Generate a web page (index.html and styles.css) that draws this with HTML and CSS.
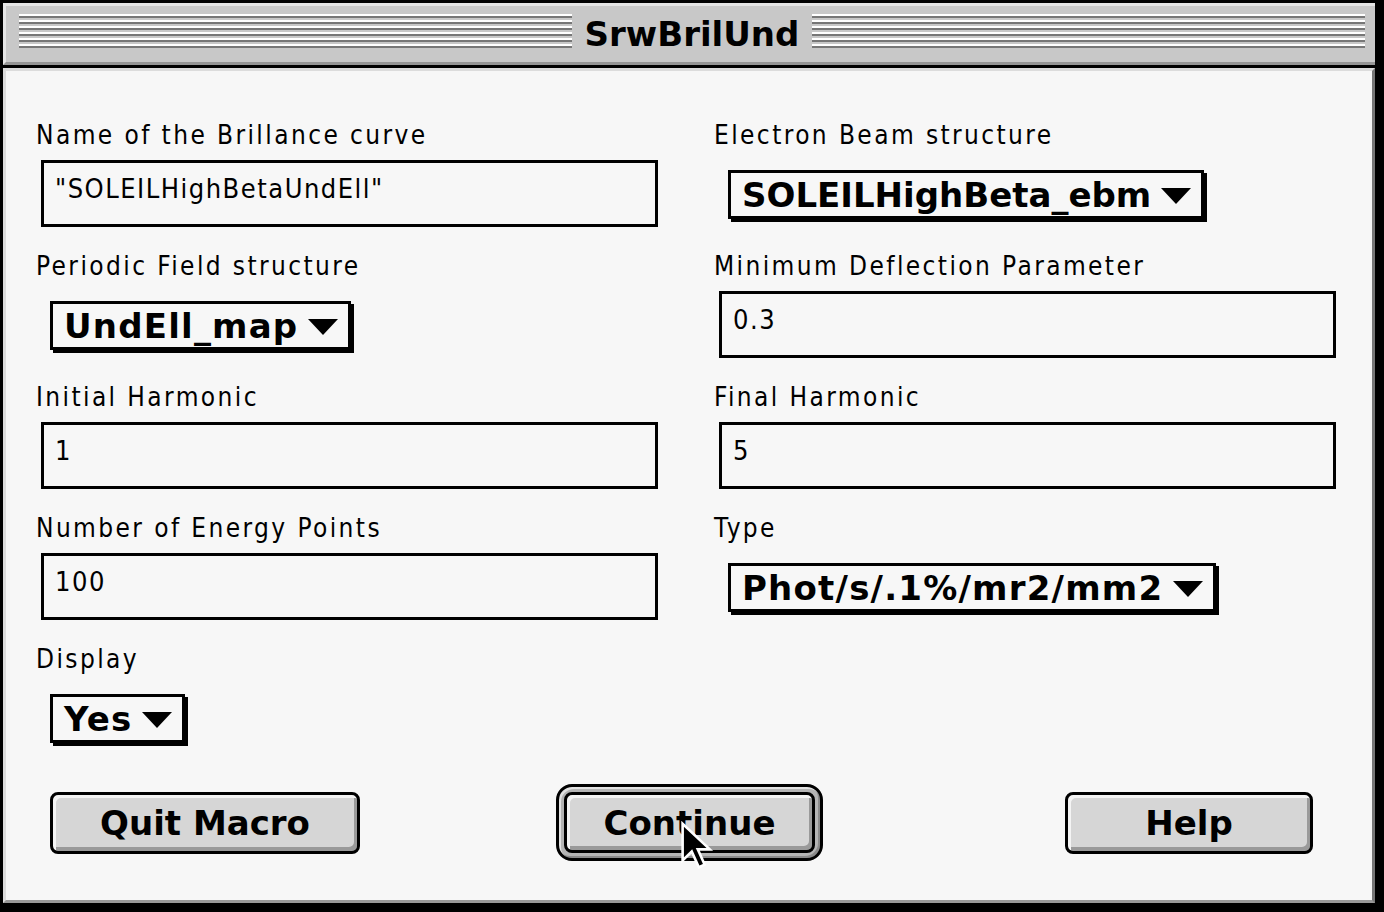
FILE: index.html
```html
<!DOCTYPE html>
<html>
<head>
<meta charset="utf-8">
<title>SrwBrilUnd</title>
<link rel="stylesheet" href="styles.css">
</head>
<body>
<div class="window">
  <div class="titlebar">
    <div class="stripes"></div>
    <div class="title">SrwBrilUnd</div>
    <div class="stripes"></div>
  </div>
  <div class="sep"></div>
  <div class="content">
    <div class="grid">
      <div class="cell">
        <div class="label">Name of the Brillance curve</div>
        <div class="field">"SOLEILHighBetaUndEll"</div>
      </div>
      <div class="cell">
        <div class="label">Electron Beam structure</div>
        <div class="popup">SOLEILHighBeta_ebm<span class="tri"></span></div>
      </div>
      <div class="cell">
        <div class="label">Periodic Field structure</div>
        <div class="popup popup-wide">UndEll_map<span class="tri"></span></div>
      </div>
      <div class="cell">
        <div class="label">Minimum Deflection Parameter</div>
        <div class="field">0.3</div>
      </div>
      <div class="cell">
        <div class="label">Initial Harmonic</div>
        <div class="field">1</div>
      </div>
      <div class="cell">
        <div class="label">Final Harmonic</div>
        <div class="field">5</div>
      </div>
      <div class="cell">
        <div class="label">Number of Energy Points</div>
        <div class="field">100</div>
      </div>
      <div class="cell">
        <div class="label">Type</div>
        <div class="popup popup-wide">Phot/s/.1%/mr2/mm2<span class="tri"></span></div>
      </div>
      <div class="cell">
        <div class="label">Display</div>
        <div class="popup popup-wide">Yes<span class="tri"></span></div>
      </div>
    </div>
    <div class="buttons">
      <div class="btn btn-quit">Quit Macro</div>
      <div class="ring"><div class="btn btn-continue">Continue</div></div>
      <div class="btn btn-help">Help</div>
    </div>
  </div>
  <svg class="cursor" width="34" height="50" viewBox="0 0 13 19">
    <path d="M1 1 L1 15 L4.5 11.6 L7.2 17.6 L9.4 16.6 L6.8 10.8 L11.4 10.8 Z" fill="#000" stroke="#fff" stroke-width="1" stroke-linejoin="miter"/>
  </svg>
</div>
</body>
</html>
```

FILE: styles.css
```css
html, body {
  margin: 0;
  padding: 0;
  background: #000;
}

.window {
  position: relative;
  box-sizing: border-box;
  width: 1384px;
  height: 912px;
  border-left: 3px solid #000;
  border-top: 3px solid #000;
  border-right: 9px solid #000;
  border-bottom: 9px solid #000;
  display: flex;
  flex-direction: column;
  background: #f7f7f7;
}

.titlebar {
  box-sizing: border-box;
  height: 62px;
  background: #c8c8c8;
  border-top: 3px solid #e4e4e4;
  border-left: 3px solid #e4e4e4;
  border-bottom: 3px solid #959595;
  padding: 8px 10px 0 13px;
  display: flex;
  align-items: flex-start;
}

.stripes {
  flex: 1;
  height: 36px;
  background: repeating-linear-gradient(to bottom, #ffffff 0 2px, #777777 2px 4px, transparent 4px 6px);
}

.title {
  padding: 0 13px;
  height: 36px;
  line-height: 40px;
  font-family: "DejaVu Sans", sans-serif;
  font-weight: bold;
  font-size: 34px;
  color: #000;
}

.sep {
  height: 3px;
  background: #000;
}

.content {
  flex: 1;
  box-sizing: border-box;
  border-top: 3px solid #dcdcdc;
  border-left: 3px solid #dcdcdc;
  border-right: 3px solid #777;
  border-bottom: 3px solid #999;
  background: #f7f7f7;
  padding: 49px 0 0 30px;
}

.grid {
  display: grid;
  grid-template-columns: 678px 1fr;
  grid-auto-rows: 131px;
}

.cell {
  display: flex;
  flex-direction: column;
  align-items: flex-start;
}

.label {
  height: 30px;
  line-height: 30px;
  font-family: "DejaVu Sans", sans-serif;
  font-stretch: condensed;
  font-size: 26px;
  letter-spacing: 2.4px;
  color: #000;
  white-space: nowrap;
}

.field {
  box-sizing: border-box;
  margin: 10px 0 0 5px;
  width: 617px;
  height: 67px;
  border: 3px solid #000;
  background: #f7f7f7;
  padding: 9px 11px;
  line-height: 34px;
  font-family: "DejaVu Sans", sans-serif;
  font-stretch: condensed;
  font-size: 27px;
  letter-spacing: 1.5px;
  color: #000;
  white-space: nowrap;
}

.popup {
  box-sizing: border-box;
  margin: 20px 0 0 14px;
  height: 49px;
  border: 3px solid #000;
  box-shadow: 3px 3px 0 #000;
  background: #f7f7f7;
  padding: 0 10px 0 11px;
  display: inline-flex;
  align-items: center;
  gap: 10px;
  font-family: "DejaVu Sans", sans-serif;
  font-weight: bold;
  font-size: 34px;
  line-height: 40px;
  color: #000;
  white-space: nowrap;
}

.popup-wide {
  letter-spacing: 1.2px;
}

.tri {
  width: 0;
  height: 0;
  border-left: 15px solid transparent;
  border-right: 15px solid transparent;
  border-top: 16px solid #000;
  margin-top: 2px;
}

.buttons {
  margin-top: 9px;
  margin-left: 14px;
  display: flex;
  align-items: center;
}

.btn {
  box-sizing: border-box;
  height: 62px;
  border: 3px solid #000;
  border-radius: 8px;
  background: #d6d6d6;
  box-shadow: inset 3px 3px 0 #f4f4f4, inset -3px -4px 0 #9a9a9a;
  display: flex;
  align-items: center;
  justify-content: center;
  font-family: "DejaVu Sans", sans-serif;
  font-weight: bold;
  font-size: 34px;
  color: #000;
  white-space: nowrap;
}

.btn-quit {
  width: 310px;
}

.ring {
  margin-left: 196px;
  box-sizing: border-box;
  width: 267px;
  height: 77px;
  border: 3px solid #000;
  border-radius: 16px;
  background: #b4b4b4;
  box-shadow: inset 2px 2px 0 #e2e2e2, inset -2px -2px 0 #8a8a8a;
  padding: 5px;
}

.btn-continue {
  width: 251px;
  height: 61px;
}

.btn-help {
  margin-left: 242px;
  width: 248px;
}

.cursor {
  position: absolute;
  left: 677px;
  top: 818px;
}
```
